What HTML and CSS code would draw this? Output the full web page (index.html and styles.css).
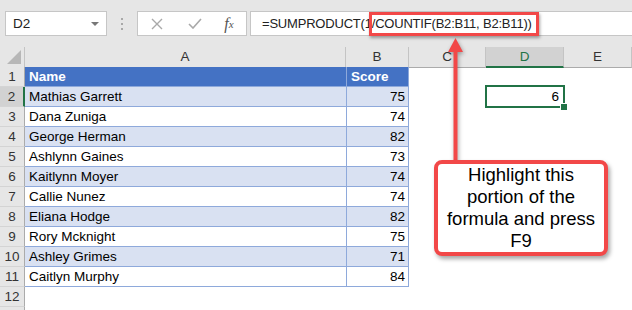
FILE: index.html
```html
<!DOCTYPE html>
<html lang="en">
<head>
    <meta charset="UTF-8">
    <meta name="viewport" content="width=device-width, initial-scale=1.0">
    <title>SUMPRODUCT COUNTIF</title>
    <link rel="stylesheet" href="styles.css">
</head>
<body>

<div class="app">
    <div class="toolbar">
        <div class="namebox">
            <span>D2</span>
            <span class="caret"></span>
        </div>
        <div class="grip"><i></i><i></i><i></i></div>
        <div class="fxbox">
            <span class="fxbtn">
                <svg width="12" height="12" viewBox="0 0 12 12"><path d="M1 1 L11 11 M11 1 L1 11" stroke="#a9a9a9" stroke-width="1.4" fill="none"/></svg>
            </span>
            <span class="fxbtn">
                <svg width="14" height="11" viewBox="0 0 14 11"><path d="M1 6 L5 10 L13 1" stroke="#a9a9a9" stroke-width="1.6" fill="none"/></svg>
            </span>
            <span class="fxbtn fx">f<sub>x</sub></span>
        </div>
        <div class="formula">=SUMPRODUCT(1/<span class="mark">COUNTIF(B2:B11, B2:B11))</span></div>
    </div>

    <div class="sheet">
        <div class="row head">
            <div class="corner">
                <svg width="14" height="14" viewBox="0 0 14 14"><polygon points="14,0 14,14 0,14" fill="#b7b7b7"/></svg>
            </div>
            <div class="colhead">A</div>
            <div class="colhead">B</div>
            <div class="colhead">C</div>
            <div class="colhead active">D</div>
            <div class="colhead">E</div>
        </div>

        <div class="row">
            <div class="rh">1</div>
            <div class="ca th">Name</div>
            <div class="cb th">Score</div>
            <div></div><div></div><div></div>
        </div>
        <div class="row">
            <div class="rh active">2</div>
            <div class="ca band">Mathias Garrett</div>
            <div class="cb band">75</div>
            <div></div>
            <div class="selected">6</div>
            <div></div>
        </div>
        <div class="row">
            <div class="rh">3</div>
            <div class="ca">Dana Zuniga</div>
            <div class="cb">74</div>
            <div></div><div></div><div></div>
        </div>
        <div class="row">
            <div class="rh">4</div>
            <div class="ca band">George Herman</div>
            <div class="cb band">82</div>
            <div></div><div></div><div></div>
        </div>
        <div class="row">
            <div class="rh">5</div>
            <div class="ca">Ashlynn Gaines</div>
            <div class="cb">73</div>
            <div></div><div></div><div></div>
        </div>
        <div class="row">
            <div class="rh">6</div>
            <div class="ca band">Kaitlynn Moyer</div>
            <div class="cb band">74</div>
            <div></div><div></div><div></div>
        </div>
        <div class="row">
            <div class="rh">7</div>
            <div class="ca">Callie Nunez</div>
            <div class="cb">74</div>
            <div></div><div></div><div></div>
        </div>
        <div class="row">
            <div class="rh">8</div>
            <div class="ca band">Eliana Hodge</div>
            <div class="cb band">82</div>
            <div></div><div></div><div></div>
        </div>
        <div class="row">
            <div class="rh">9</div>
            <div class="ca">Rory Mcknight</div>
            <div class="cb">75</div>
            <div></div><div></div><div></div>
        </div>
        <div class="row">
            <div class="rh">10</div>
            <div class="ca band">Ashley Grimes</div>
            <div class="cb band">71</div>
            <div></div><div></div><div></div>
        </div>
        <div class="row">
            <div class="rh">11</div>
            <div class="ca">Caitlyn Murphy</div>
            <div class="cb">84</div>
            <div></div><div></div><div></div>
        </div>
        <div class="row">
            <div class="rh">12</div>
            <div></div><div></div><div></div><div></div><div></div>
        </div>
        <div class="row">
            <div class="rh"></div>
            <div></div><div></div><div></div><div></div><div></div>
        </div>
    </div>

    <!-- pointer from the note up to the formula -->
    <svg class="arrow" width="30" height="135" viewBox="0 0 30 135">
        <line x1="15.5" y1="20" x2="15.5" y2="131" stroke="#f24848" stroke-width="4"/>
        <polygon points="15.5,8 23,22 8,22" fill="#f24848"/>
    </svg>

    <div class="callout">Highlight this<br>portion of the<br>formula and press<br>F9</div>
</div>

</body>
</html>
```

FILE: styles.css
```css
/* Excel window */
body {
    margin: 0;
    font-family: "Liberation Sans", Arial, sans-serif;
    background: #ffffff;
}
.app {
    position: relative;
    width: 632px;
    height: 310px;
    overflow: hidden;
}

/* formula bar */
.toolbar {
    display: flex;
    height: 47px;
    box-sizing: border-box;
    padding-top: 11px;
    background: #e6e6e6;
}
.namebox {
    display: flex;
    align-items: center;
    justify-content: space-between;
    width: 102px;
    height: 25px;
    margin-left: 5px;
    box-sizing: border-box;
    padding: 0 7px 0 7px;
    background: #ffffff;
    border: 1px solid #c6c6c6;
    font-size: 13.5px;
    color: #222;
}
.caret {
    width: 0;
    height: 0;
    border-left: 4px solid transparent;
    border-right: 4px solid transparent;
    border-top: 4px solid #777;
}
.grip {
    display: flex;
    flex-direction: column;
    align-items: center;
    justify-content: center;
    gap: 3px;
    width: 30px;
    height: 25px;
}
.grip i {
    display: block;
    width: 2px;
    height: 2px;
    background: #a8a8a8;
}
.fxbox {
    display: flex;
    align-items: center;
    width: 110px;
    height: 25px;
    box-sizing: border-box;
    background: #ffffff;
    border: 1px solid #c6c6c6;
}
.fxbtn {
    display: flex;
    align-items: center;
    justify-content: center;
    width: 38px;
    height: 23px;
}
.fxbtn.fx {
    width: 30px;
    font-family: "Liberation Serif", "Times New Roman", serif;
    font-style: italic;
    font-size: 16px;
    color: #555;
}
.fxbtn.fx sub {
    font-size: 11px;
    vertical-align: -1px;
}
.formula {
    flex: 1;
    height: 25px;
    margin-left: 3px;
    margin-right: -2px;
    box-sizing: border-box;
    padding-left: 11px;
    background: #ffffff;
    border: 1px solid #c6c6c6;
    font-size: 13px;
    letter-spacing: -0.2px;
    line-height: 23px;
    color: #222;
    white-space: nowrap;
}
.mark {
    position: relative;
    display: inline-block;
}
.mark::after {
    content: "";
    position: absolute;
    top: 0;
    bottom: -1px;
    left: -6px;
    right: -7px;
    border: 3px solid #f24848;
    box-shadow: 1px 2px 3px rgba(0, 0, 0, 0.35);
}

/* grid */
.row {
    display: grid;
    grid-template-columns: 25px 321px 63px 77px 78px 68px;
    height: 20px;
    font-size: 13.5px;
}
.row > div {
    box-sizing: border-box;
    line-height: 19px;
    white-space: nowrap;
}
.head > div {
    background: #e6e6e6;
    border-bottom: 1px solid #ababab;
    color: #333;
    text-align: center;
}
.corner {
    display: flex;
    align-items: flex-end;
    justify-content: flex-end;
    padding: 0 3px 3px 0;
    border-right: 1px solid #c4c4c4;
}
.corner svg {
    display: block;
}
.colhead {
    border-right: 1px solid #c4c4c4;
}
.colhead.active {
    background: #d2d2d2;
    color: #217346;
    border-bottom: 2px solid #217346;
}
.rh {
    background: #e6e6e6;
    border-right: 1px solid #ababab;
    border-bottom: 1px solid #d4d4d4;
    color: #333;
    text-align: center;
}
.rh.active {
    background: #d2d2d2;
    border-right: 2px solid #217346;
}

/* table */
.ca {
    padding-left: 4px;
    border-bottom: 1px solid #8ea9db;
    color: #000;
}
.cb {
    padding-right: 3px;
    text-align: right;
    border-left: 1px solid #8ea9db;
    border-right: 1px solid #8ea9db;
    border-bottom: 1px solid #8ea9db;
    color: #000;
}
.th {
    background: #4472c4;
    color: #ffffff;
    font-weight: bold;
    text-align: left;
    padding-left: 4px;
}
.band {
    background: #d9e1f2;
}
.selected {
    position: relative;
    padding-right: 5px;
    text-align: right;
    color: #000;
}
.selected::before {
    content: "";
    position: absolute;
    top: -2px;
    left: -1px;
    right: -1px;
    bottom: -1px;
    border: 2px solid #217346;
}
.selected::after {
    content: "";
    position: absolute;
    right: -3px;
    bottom: -3px;
    width: 6px;
    height: 6px;
    background: #217346;
    border-left: 1px solid #fff;
    border-top: 1px solid #fff;
}

/* annotation */
.arrow {
    position: absolute;
    left: 440px;
    top: 30px;
    filter: drop-shadow(1px 2px 2px rgba(0, 0, 0, 0.35));
}
.callout {
    position: absolute;
    left: 434px;
    top: 160px;
    width: 174px;
    height: 96px;
    box-sizing: border-box;
    background: #ffffff;
    border: 4px solid #f24848;
    border-radius: 8px;
    box-shadow: 2px 3px 4px rgba(0, 0, 0, 0.35);
    font-size: 18.5px;
    line-height: 22px;
    text-align: center;
    color: #000;
}
```
